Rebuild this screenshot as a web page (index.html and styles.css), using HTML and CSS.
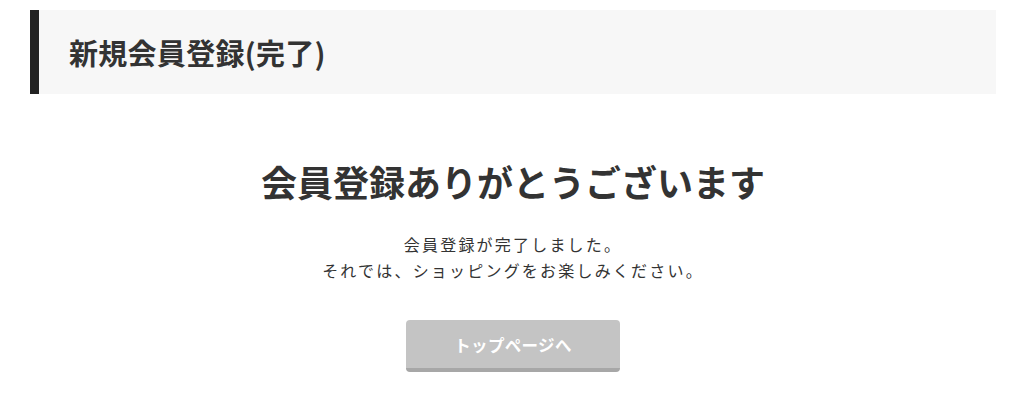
FILE: index.html
```html
<!DOCTYPE html>
<html lang="ja">
<head>
<meta charset="utf-8">
<title>新規会員登録(完了)</title>
<link rel="stylesheet" href="styles.css">
</head>
<body>
<div class="page">
  <div class="page-header">
    <h1 class="page-title">新規会員登録(完了)</h1>
  </div>
  <div class="complete">
    <h2 class="complete-title">会員登録ありがとうございます</h2>
    <p class="complete-message">会員登録が完了しました。<br>それでは、ショッピングをお楽しみください。</p>
    <div class="complete-actions">
      <a class="btn-top" href="#">トップページへ</a>
    </div>
  </div>
</div>
</body>
</html>
```

FILE: styles.css
```css
* { box-sizing: border-box; }
html, body { margin: 0; padding: 0; background: #fff; }
body {
  font-family: "Noto Sans CJK JP", "Noto Sans", sans-serif;
  color: #333;
}
.page {
  padding: 10px 28px 0 30px;
}
.page-header {
  height: 84px;
  background: #f7f7f7;
  border-left: 9px solid #222;
  padding-left: 30px;
  display: flex;
  align-items: center;
}
.page-title {
  margin: 0;
  font-size: 29px;
  font-weight: bold;
  line-height: 1;
  letter-spacing: 0.01em;
  color: #333;
}
.complete {
  display: flex;
  flex-direction: column;
  align-items: center;
  text-align: center;
}
.complete-title {
  margin: 60px 0 0;
  font-size: 36px;
  line-height: 54px;
  font-weight: bold;
  color: #333;
}
.complete-message {
  margin: 23px 0 0;
  font-size: 16px;
  line-height: 26px;
  letter-spacing: 2.2px;
  color: #333;
}
.complete-actions {
  margin-top: 37px;
}
.btn-top {
  display: flex;
  align-items: center;
  justify-content: center;
  width: 214px;
  height: 52px;
  background: #c4c4c4;
  border-bottom: 4px solid #a7a7a7;
  border-radius: 4px;
  color: #fff;
  font-size: 16.5px;
  font-weight: bold;
  letter-spacing: 0.02em;
  text-decoration: none;
  padding-top: 2px;
}
```
